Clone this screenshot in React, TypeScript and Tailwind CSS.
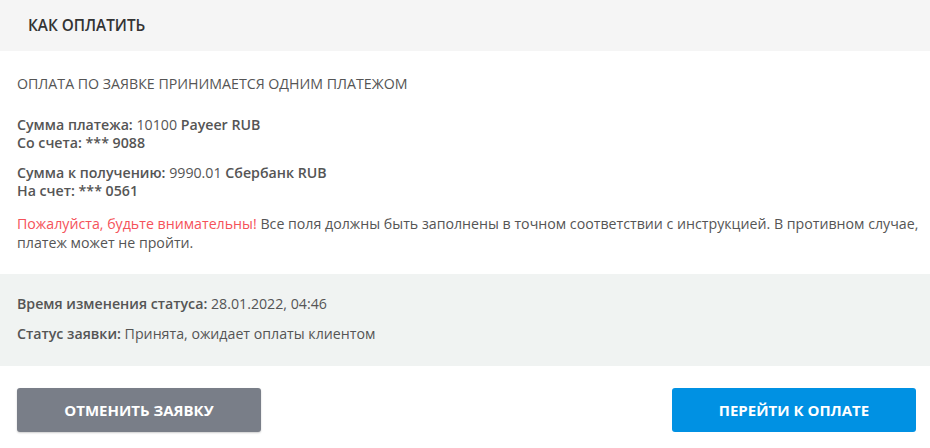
import React from "react";

export default function App() {
  return (
    <div className="w-[930px] h-[448px] bg-white text-[#555] overflow-hidden" style={{ fontFamily: '"Open Sans", "Liberation Sans", sans-serif' }}>
      <div className="h-[51px] bg-[#f5f5f5] flex items-center pl-[28px]">
        <span className="text-[15.3px] font-semibold text-[#333] uppercase">Как оплатить</span>
      </div>
      <div className="pl-[17px] pr-[6px] pt-[24px] text-[14.2px] leading-[18px]">
        <p>ОПЛАТА ПО ЗАЯВКЕ ПРИНИМАЕТСЯ ОДНИМ ПЛАТЕЖОМ</p>
        <div className="mt-[23px]">
          <p><span className="font-semibold">Сумма платежа:</span> 10100 <span className="font-semibold">Payeer RUB</span></p>
          <p className="font-semibold">Со счета: *** 9088</p>
        </div>
        <div className="mt-[12px]">
          <p><span className="font-semibold">Сумма к получению:</span> 9990.01 <span className="font-semibold">Сбербанк RUB</span></p>
          <p className="font-semibold">На счет: *** 0561</p>
        </div>
        <p className="mt-[14px] leading-[19px]">
          <span className="text-[#f5525a]">Пожалуйста, будьте внимательны!</span> Все поля должны быть заполнены в точном соответствии с инструкцией. В противном случае, платеж может не пройти.
        </p>
      </div>
      <div className="mt-[22px] bg-[#f0f3f2] px-[17px] pt-[21px] pb-[23px] text-[14.2px] leading-[18px]">
        <p><span className="font-semibold">Время изменения статуса:</span> 28.01.2022, 04:46</p>
        <p className="mt-[12px]"><span className="font-semibold">Статус заявки:</span> Принята, ожидает оплаты клиентом</p>
      </div>
      <div className="mt-[22px] pl-[17px] pr-[14px] flex justify-between">
        <button className="w-[244px] h-[44px] rounded-[3px] bg-[#797e88] text-white text-[15px] font-bold uppercase shadow-[0_1px_2px_rgba(0,0,0,0.2)]">Отменить заявку</button>
        <button className="w-[244px] h-[44px] rounded-[3px] bg-[#0091e3] text-white text-[15px] font-bold uppercase">Перейти к оплате</button>
      </div>
    </div>
  );
}
